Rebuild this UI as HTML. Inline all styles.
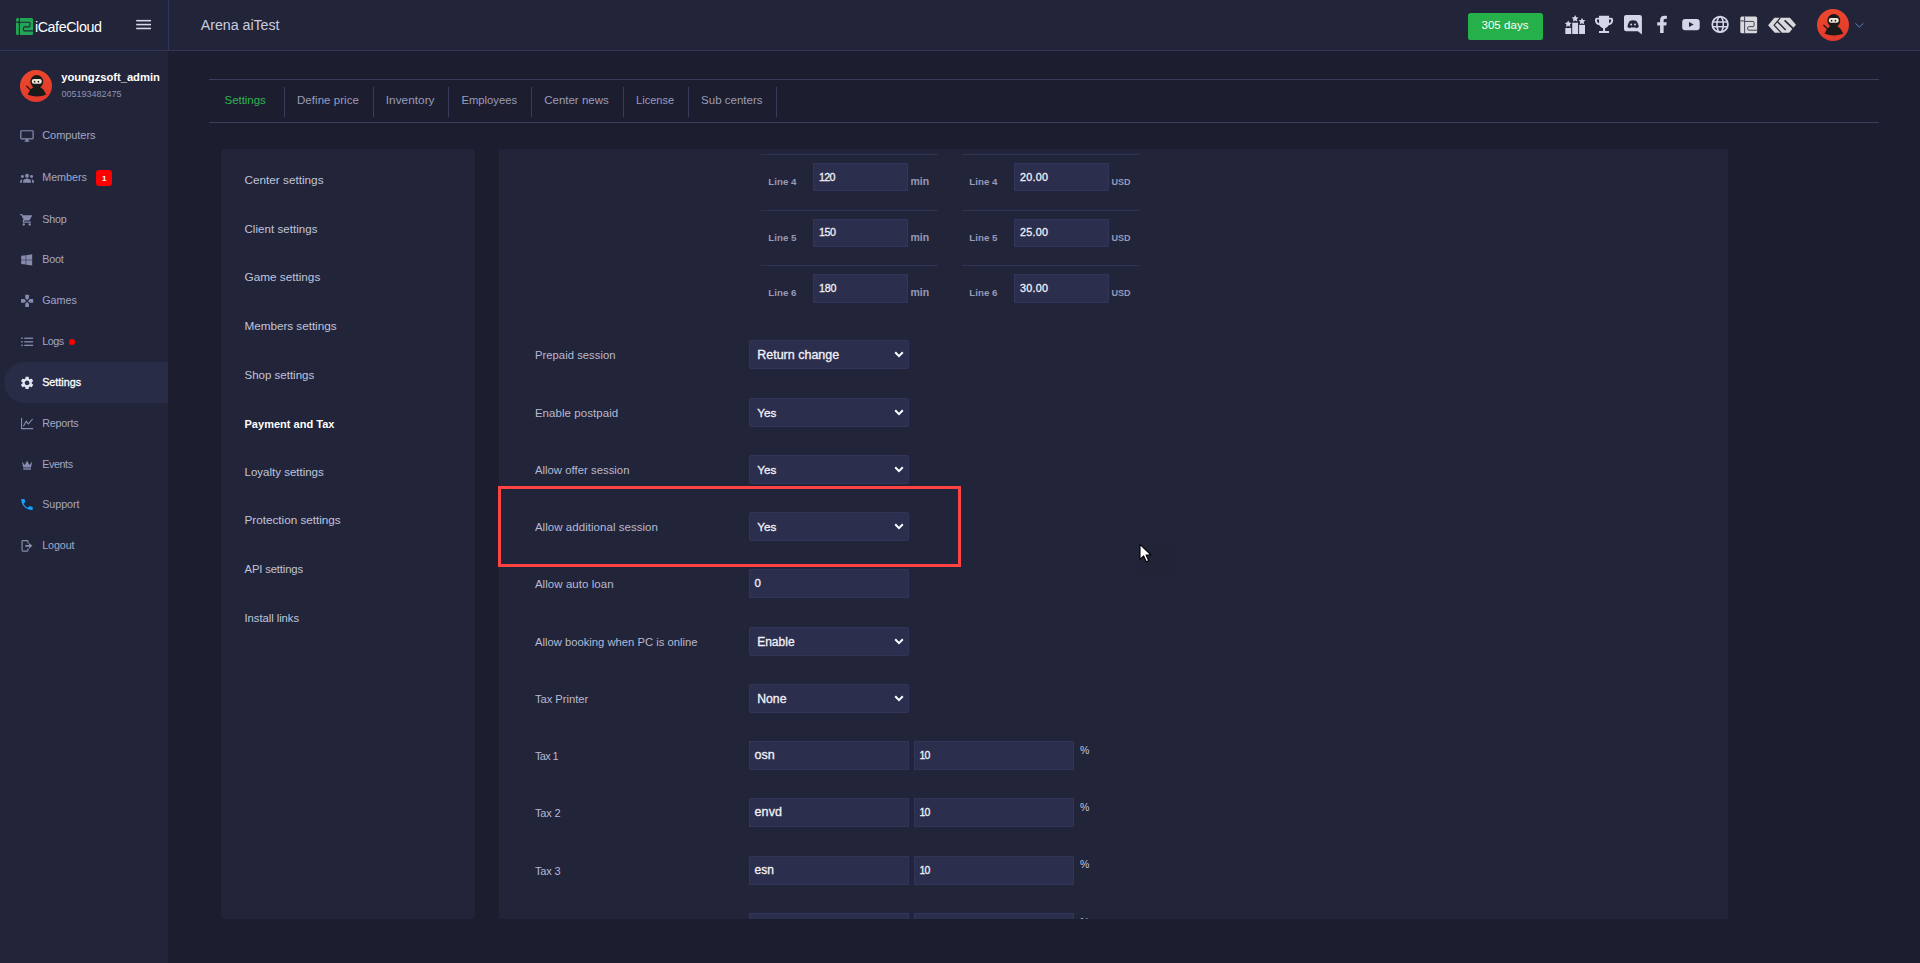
<!DOCTYPE html>
<html lang="en"><head><meta charset="utf-8"><title>iCafeCloud - Settings</title>
<style>
html,body{margin:0;padding:0}
body{width:1920px;height:963px;overflow:hidden;background:#1c1d2f;font-family:"Liberation Sans",sans-serif;position:relative}
.t{position:absolute;white-space:nowrap;line-height:16px;height:16px}
.m{-webkit-text-stroke:.3px currentColor}
svg{position:absolute;left:0;top:0;overflow:visible}
header{position:absolute;left:0;top:0;width:1920px;height:50px;background:#222439;border-bottom:1px solid #32365a}
header .brand{position:absolute;left:0;top:0;width:168px;height:50px;border-right:1px solid #32365a}
aside{position:absolute;left:0;top:51px;width:168px;height:912px;background:#222439}
aside ul{list-style:none;margin:0;padding:0}
.active{position:absolute;left:4px;top:362px;width:164px;height:41px;border-radius:20.5px 0 0 20.5px;background:#292c47}
.badge{position:absolute;left:96px;top:169.500px;width:16px;height:16.500px;border-radius:3px;background:#ff0000}
.dot{position:absolute;left:69px;top:339px;width:6px;height:6px;border-radius:50%;background:#ff0000}
main{position:absolute;left:0;top:0;width:1920px;height:963px}
.tabs{position:absolute;left:209px;top:79px;width:1670px;height:42px;border-top:1px solid #3a3c5c;border-bottom:1px solid #3a3c5c}
.sep{position:absolute;top:87px;width:1px;height:30px;background:#3a3c5c}
.card{position:absolute;background:#222439;border-radius:4px}
.inp{position:absolute;box-sizing:border-box;background:#2c2e4e;border:1px solid #323559;border-radius:0}
.sel{border-radius:2px}
.hl{position:absolute;height:1px;background:#2f3255}
.btn{position:absolute;left:1468px;top:13px;width:75px;height:27px;border-radius:2.500px;background:#26b04a}
.mark{position:absolute;left:498px;top:486px;width:463px;height:81px;box-sizing:border-box;border:3px solid #ff4242}
</style></head><body>

<header><div class="brand"></div></header>
<aside></aside>
<nav>
<div class="active"></div>
<span class="t" style="left:34.90px;top:19.000px;font-size:14.25px;color:#ffffff;letter-spacing:-0.390px;">iCafeCloud</span>
<span class="t" style="left:200.80px;top:17.000px;font-size:14.25px;color:#c9ccdf;letter-spacing:-0.043px;">Arena aiTest</span>
<span class="t" style="left:61.20px;top:69.000px;font-size:11.25px;color:#ffffff;font-weight:700;letter-spacing:-0.049px;">youngzsoft_admin</span>
<span class="t" style="left:61.50px;top:86.000px;font-size:9.0px;color:#8f93b0;">005193482475</span>
<span class="t" style="left:42.20px;top:127.000px;font-size:11.0px;color:#a3a7c5;letter-spacing:-0.055px;">Computers</span>
<span class="t" style="left:42.20px;top:169.000px;font-size:10.75px;color:#a3a7c5;">Members</span>
<span class="t" style="left:42.20px;top:211.000px;font-size:10.75px;color:#a3a7c5;letter-spacing:-0.202px;">Shop</span>
<span class="t" style="left:42.20px;top:251.000px;font-size:10.75px;color:#a3a7c5;letter-spacing:-0.204px;">Boot</span>
<span class="t" style="left:42.20px;top:292.000px;font-size:10.75px;color:#a3a7c5;">Games</span>
<span class="t" style="left:42.20px;top:333.000px;font-size:10.75px;color:#a3a7c5;letter-spacing:-0.453px;">Logs</span>
<span class="t m" style="left:42.20px;top:374.000px;font-size:10.75px;color:#ffffff;">Settings</span>
<span class="t" style="left:42.20px;top:415.000px;font-size:10.75px;color:#a3a7c5;letter-spacing:-0.192px;">Reports</span>
<span class="t" style="left:42.20px;top:456.000px;font-size:10.75px;color:#a3a7c5;letter-spacing:-0.394px;">Events</span>
<span class="t" style="left:42.20px;top:496.000px;font-size:10.75px;color:#a3a7c5;letter-spacing:-0.050px;">Support</span>
<span class="t" style="left:42.20px;top:537.000px;font-size:10.75px;color:#a3a7c5;letter-spacing:-0.097px;">Logout</span>
<div class="badge"></div><span class="t" style="left:102.10px;top:171.000px;font-size:8.0px;color:#ffffff;font-weight:700;">1</span>
<div class="dot"></div>
</nav>
<svg width="1920" height="600" viewBox="0 0 1920 600"><defs><linearGradient id="av" x1="0" y1="0" x2="0.3" y2="1"><stop offset="0" stop-color="#ee4a2e"/><stop offset="1" stop-color="#e23a2c"/></linearGradient></defs>
<g transform="translate(16 17.9) scale(1)"><rect width="17.1" height="17.1" rx="1.6" fill="#22a555"/>
<path d="M3.35 0V17.1M0 4.2H3.35" stroke="#222439" stroke-width="1.1" fill="none"/>
<path d="M3.35 4.3H12.9Q14 4.3 14 5.4V7.9Q14 9 12.9 9H8.6Q7.5 9 7.5 10.1V11.9Q7.5 13 8.6 13H17.1" stroke="#222439" stroke-width="1.1" fill="none"/></g>
<rect x="136.2" y="19.9" width="14.8" height="1.55" fill="#d6d9ea"/>
<rect x="136.2" y="23.8" width="14.8" height="1.55" fill="#d6d9ea"/>
<rect x="136.2" y="27.7" width="14.8" height="1.55" fill="#d6d9ea"/>
<g transform="translate(36 86)"><circle r="16" fill="url(#av)"/>
<path d="M-8.3 8.8 Q-6 2.4 -1.800 0.7 L3.400 0.7 Q7.800 2.4 10.100 8.8 Q1 12 -8.300 8.8z" fill="#1a1a1a"/>
<circle cx="0.8" cy="-4.4" r="6.5" fill="#1a1a1a"/>
<rect x="-4.2" y="-7" width="10" height="4.8" rx="2.2" fill="#f3ead6"/>
<circle cx="-1.4" cy="-4.3" r="0.85" fill="#1a1a1a"/><circle cx="2.4" cy="-4.300" r="0.85" fill="#1a1a1a"/>
<path d="M-9.2 0.2 L-4.2 5.2" stroke="#1a1a1a" stroke-width="1.3" stroke-linecap="round"/></g>
<path transform="translate(19.586 129.040) scale(0.61364 0.58000)" fill="#878cae" d="M21 2H3c-1.1 0-2 .9-2 2v12c0 1.1.9 2 2 2h7v2H8v2h8v-2h-2v-2h7c1.1 0 2-.9 2-2V4c0-1.1-.9-2-2-2zm0 14H3V4h18v12z"/>
<g fill="#878cae"><circle cx="27" cy="175.700" r="1.95"/><path d="M23.1 182.7v-1.300c0-2 2.600-2.900 3.900-2.900s3.900.9 3.900 2.900v1.300z"/><circle cx="22.4" cy="176.500" r="1.45"/><circle cx="31.600" cy="176.500" r="1.45"/><path d="M20 182.700v-1c0-1.500 1.500-2.300 2.700-2.400-.500.600-.800 1.300-.800 2.200v1.200z"/><path d="M34 182.700v-1c0-1.500-1.500-2.300-2.700-2.400.5.600.8 1.300.8 2.200v1.200z"/></g>
<path transform="translate(19.608 212.830) scale(0.59223 0.58500)" fill="#878cae" d="M7 18c-1.1 0-1.99.9-1.99 2S5.9 22 7 22s2-.9 2-2-.9-2-2-2zM1 2v2h2l3.6 7.59-1.35 2.45c-.16.28-.25.61-.25.96 0 1.1.9 2 2 2h12v-2H7.42c-.14 0-.25-.11-.25-.25l.03-.12.9-1.63h7.45c.75 0 1.41-.41 1.75-1.03l3.58-6.49c.08-.14.12-.31.12-.48 0-.55-.45-1-1-1H5.21l-.94-2H1zm16 16c-1.1 0-1.99.9-1.99 2s.89 2 1.99 2 2-.9 2-2-.9-2-2-2z"/>
<path transform="translate(21.200 253.500) scale(0.02455 0.02500)" fill="#878cae" d="M0 93.7l183.6-25.3v177.4H0V93.7zm0 324.6l183.6 25.3V268.4H0v149.9zm203.8 28L448 480V268.4H203.8v177.9zm0-380.6v180.1H448V32L203.8 65.7z"/>
<path transform="translate(19.780 293.580) scale(0.61000 0.61000)" fill="#878cae" d="M15 7.5V2H9v5.5l3 3 3-3zM7.5 9H2v6h5.5l3-3-3-3zM9 16.5V22h6v-5.5l-3-3-3 3zM16.5 9l-3 3 3 3H22V9h-5.500z"/>
<rect x="21.2" y="337.5" width="1.5" height="1.5" fill="#878cae"/><rect x="24.300" y="337.6" width="8.8" height="1.3" fill="#878cae"/>
<rect x="21.2" y="341.05" width="1.5" height="1.5" fill="#878cae"/><rect x="24.300" y="341.15000000000003" width="8.8" height="1.3" fill="#878cae"/>
<rect x="21.2" y="344.6" width="1.5" height="1.5" fill="#878cae"/><rect x="24.300" y="344.70000000000005" width="8.8" height="1.3" fill="#878cae"/>
<path transform="translate(19.313 375.275) scale(0.64894 0.63542)" fill="#e2e4f1" d="M19.14 12.94c.04-.3.06-.61.06-.94 0-.32-.02-.64-.07-.94l2.03-1.58c.18-.14.23-.41.12-.61l-1.92-3.32c-.12-.22-.37-.29-.59-.22l-2.39.96c-.5-.38-1.03-.7-1.62-.94l-.36-2.54c-.04-.24-.24-.41-.48-.41h-3.84c-.24 0-.43.17-.47.41l-.36 2.54c-.59.24-1.13.57-1.62.94l-2.39-.96c-.22-.08-.47 0-.59.22L2.74 8.870c-.12.21-.08.47.12.61l2.030 1.580c-.05.3-.09.63-.09.940s.02.640.07.940l-2.030 1.580c-.18.140-.23.410-.12.610l1.920 3.320c.12.220.370.290.590.220l2.390-.960c.5.380 1.030.7 1.620.940l.360 2.540c.05.240.240.410.480.410h3.840c.240 0 .440-.170.470-.410l.360-2.540c.590-.240 1.130-.560 1.620-.940l2.390.960c.220.080.470 0 .590-.220l1.920-3.320c.12-.220.070-.470-.12-.610l-2.010-1.580zM12 15.600c-1.980 0-3.600-1.620-3.600-3.600s1.620-3.600 3.600-3.600 3.600 1.620 3.600 3.600-1.620 3.600-3.600 3.600z"/>
<path d="M21.550 418v10.650H33.200" stroke="#878cae" stroke-width="1.1" fill="none"/><path d="M23.400 426.200L26.200 421.300L28.400 423.800L32.600 419" stroke="#878cae" stroke-width="1.1" fill="none"/>
<path d="M22 461.500L24.700 464.900L27.100 460.700L29.500 464.900L32.200 461.500L31 467.400H23.200z" fill="#878cae"/><rect x="23.200" y="468.300" width="7.800" height="1.400" fill="#878cae"/>
<path transform="translate(19.283 497.167) scale(0.63889 0.61111)" fill="#12a4ff" d="M6.62 10.79c1.44 2.83 3.76 5.14 6.59 6.59l2.2-2.2c.27-.27.67-.36 1.02-.24 1.12.37 2.33.57 3.57.57.55 0 1 .45 1 1V20c0 .55-.45 1-1 1-9.39 0-17-7.61-17-17 0-.55.45-1 1-1h3.5c.55 0 1 .45 1 1 0 1.25.2 2.45.57 3.57.11.35.03.74-.25 1.020l-2.200 2.200z"/>
<path d="M28 543.400V541.400q0-.85-.85-.85H22.900q-.85 0-.85.85V550.300q0 .85.85.85H27.150q.85 0 .85-.85V548.300" stroke="#878cae" stroke-width="1.150" fill="none"/><path d="M25.300 545H29V543.100L32.500 545.850L29 548.600V546.700H25.300z" fill="#878cae"/>
<g fill="#d3d6e6"><rect x="1565.3" y="28" width="5.9" height="6"/><rect x="1572.200" y="22.700" width="5.900" height="11.300"/><rect x="1579.100" y="24.900" width="5.900" height="9.100"/></g>
<polygon fill="#d3d6e6" points="1568.20,20.40 1569.26,22.54 1571.62,22.89 1569.91,24.56 1570.32,26.91 1568.20,25.80 1566.08,26.91 1566.49,24.56 1564.78,22.89 1567.14,22.54"/>
<polygon fill="#d3d6e6" points="1575.10,15.10 1576.16,17.24 1578.52,17.59 1576.81,19.26 1577.22,21.61 1575.10,20.50 1572.98,21.61 1573.39,19.26 1571.68,17.59 1574.04,17.24"/>
<polygon fill="#d3d6e6" points="1582.00,17.80 1583.06,19.94 1585.42,20.29 1583.71,21.96 1584.12,24.31 1582.00,23.20 1579.88,24.31 1580.29,21.96 1578.58,20.29 1580.94,19.94"/>
<path transform="translate(1591.983 12.933) scale(1.00556 0.95556)" fill="#d3d6e6" d="M19 5h-2V3H7v2H5c-1.1 0-2 .9-2 2v1c0 2.55 1.92 4.63 4.39 4.94.63 1.5 1.98 2.63 3.61 2.96V19H7v2h10v-2h-4v-3.1c1.63-.33 2.98-1.46 3.61-2.96C19.08 12.63 21 10.55 21 8V7c0-1.1-.9-2-2-2zM5 8V7h2v3.82C5.840 10.400 5 9.300 5 8zm14 0c0 1.300-.840 2.400-2 2.820V7h2v1z"/>
<path d="M1626.200 14.900h13.500a2.200 2.200 0 0 1 2.200 2.200v17.500l-4-3.300h-11.700a2.200 2.200 0 0 1 -2.200-2.200v-12a2.200 2.200 0 0 1 2.200-2.200z" fill="#d3d6e6"/>
<path d="M1629.700 20.900q3.400-1.300 6.800 0q2.100 3 2.300 6.100q-1.300 1-2.900 1.300l-.6-1q-2.200.5-4.400 0l-.6 1q-1.600-.3-2.900-1.300q.2-3.100 2.300-6.100z" fill="#222439"/><circle cx="1631.200" cy="24.600" r="1" fill="#d3d6e6"/><circle cx="1635" cy="24.600" r="1" fill="#d3d6e6"/>
<path transform="translate(1656.390 15.800) scale(0.03537 0.03359)" fill="#d3d6e6" d="M279.14 288l14.22-92.660h-88.910v-60.130c0-25.350 12.420-50.060 52.240-50.060h40.420V6.260S260.430 0 225.360 0c-73.220 0-121.080 44.380-121.080 124.720v70.620H22.890V288h81.390v224h100.170V288z"/>
<rect x="1682.200" y="18.900" width="17.500" height="11.400" rx="3" fill="#d3d6e6"/><path d="M1689 22.100V27L1693.700 24.550z" fill="#222439"/>
<g stroke="#d3d6e6" fill="none"><circle cx="1720.100" cy="24.400" r="7.800" stroke-width="1.800"/><ellipse cx="1720.100" cy="24.400" rx="3.200" ry="7.800" stroke-width="1.600"/><path d="M1712.600 22H1727.600M1712.600 26.800H1727.600" stroke-width="1.600"/></g>
<g transform="translate(1740.3 16.4) scale(0.985)"><rect width="17.1" height="17.1" rx="1.6" fill="#dadadd"/>
<path d="M4.4 0V17.1M0 4.6H4.4" stroke="#3c3e55" stroke-width="1.0" fill="none"/>
<path d="M4.4 5.1H12.9Q14 5.1 14 6.199999999999999V9.3Q14 10.4 12.9 10.4H8.6Q7.5 10.4 7.5 11.5V12.9Q7.5 14 8.6 14H17.1" stroke="#3c3e55" stroke-width="1.0" fill="none"/></g>
<path d="M1768.100 25.200L1774.400 17.800H1789.900L1796 24.700L1789.100 32.800H1774.800z" fill="#d9d9dc"/>
<path d="M1780.300 17.900L1774.100 25.200L1781.400 32.900" stroke="#222439" stroke-width="1.200" fill="none"/><path d="M1777.300 21.600L1785.700 30" stroke="#222439" stroke-width="1.400"/><path d="M1784.600 20.400L1793.800 29.200" stroke="#222439" stroke-width="1.600"/>
<g transform="translate(1833 25)"><circle r="16" fill="url(#av)"/>
<path d="M-8.3 8.8 Q-6 2.4 -1.800 0.7 L3.400 0.7 Q7.800 2.4 10.100 8.8 Q1 12 -8.300 8.8z" fill="#1a1a1a"/>
<circle cx="0.8" cy="-4.4" r="6.5" fill="#1a1a1a"/>
<rect x="-4.2" y="-7" width="10" height="4.8" rx="2.2" fill="#f3ead6"/>
<circle cx="-1.4" cy="-4.3" r="0.85" fill="#1a1a1a"/><circle cx="2.4" cy="-4.300" r="0.85" fill="#1a1a1a"/>
<path d="M-9.2 0.2 L-4.2 5.2" stroke="#1a1a1a" stroke-width="1.3" stroke-linecap="round"/></g>
<path d="M1855.400 23.300L1859.400 27.100L1863.400 23.300" stroke="#6480ba" stroke-width="1" fill="none"/>
</svg>
<div class="btn"></div><span class="t" style="left:1481.50px;top:17.000px;font-size:11.5px;color:#ffffff;letter-spacing:0.041px;">305 days</span>
<main>
<div class="tabs"></div>
<span class="t" style="left:224.50px;top:92.000px;font-size:11.5px;color:#2fb450;letter-spacing:-0.044px;">Settings</span>
<span class="t" style="left:297.00px;top:92.000px;font-size:11.5px;color:#9a9eba;letter-spacing:0.045px;">Define price</span>
<span class="t" style="left:385.80px;top:92.000px;font-size:11.75px;color:#9a9eba;letter-spacing:0.041px;">Inventory</span>
<span class="t" style="left:461.40px;top:92.000px;font-size:11.25px;color:#9a9eba;">Employees</span>
<span class="t" style="left:544.20px;top:92.000px;font-size:11.5px;color:#9a9eba;">Center news</span>
<span class="t" style="left:636.10px;top:92.000px;font-size:11.0px;color:#9a9eba;">License</span>
<span class="t" style="left:701.10px;top:92.000px;font-size:11.5px;color:#9a9eba;">Sub centers</span>
<div class="sep" style="left:284px"></div>
<div class="sep" style="left:373px"></div>
<div class="sep" style="left:448px"></div>
<div class="sep" style="left:531px"></div>
<div class="sep" style="left:623px"></div>
<div class="sep" style="left:688px"></div>
<div class="sep" style="left:776px"></div>
<div class="card" style="left:221px;top:149px;width:254px;height:770px"></div>
<span class="t" style="left:244.50px;top:172.000px;font-size:11.75px;color:#c0c4db;">Center settings</span>
<span class="t" style="left:244.50px;top:221.000px;font-size:11.5px;color:#c0c4db;letter-spacing:0.051px;">Client settings</span>
<span class="t" style="left:244.50px;top:269.000px;font-size:11.75px;color:#c0c4db;">Game settings</span>
<span class="t" style="left:244.50px;top:318.000px;font-size:11.75px;color:#c0c4db;letter-spacing:-0.046px;">Members settings</span>
<span class="t" style="left:244.50px;top:367.000px;font-size:11.5px;color:#c0c4db;">Shop settings</span>
<span class="t" style="left:244.50px;top:416.000px;font-size:11.0px;color:#ffffff;font-weight:700;letter-spacing:0.023px;">Payment and Tax</span>
<span class="t" style="left:244.50px;top:464.000px;font-size:11.5px;color:#c0c4db;">Loyalty settings</span>
<span class="t" style="left:244.50px;top:512.000px;font-size:11.75px;color:#c0c4db;letter-spacing:-0.024px;">Protection settings</span>
<span class="t" style="left:244.50px;top:561.000px;font-size:11.25px;color:#c0c4db;letter-spacing:-0.128px;">API settings</span>
<span class="t" style="left:244.50px;top:610.000px;font-size:11.25px;color:#c0c4db;letter-spacing:-0.040px;">Install links</span>
<div class="card" style="left:499px;top:149px;width:1229px;height:770px;border-radius:0"></div>
<div class="hl" style="left:761px;top:154.0px;width:177px"></div><div class="hl" style="left:962px;top:154.0px;width:177px"></div>
<div class="inp" style="left:813px;top:163.0px;width:95px;height:28px"></div><div class="inp" style="left:1014px;top:163.0px;width:95px;height:28px"></div>
<span class="t" style="left:768.30px;top:174.000px;font-size:9.75px;color:#9699b8;font-weight:700;">Line 4</span>
<span class="t" style="left:969.30px;top:174.000px;font-size:9.75px;color:#9699b8;font-weight:700;">Line 4</span>
<span class="t" style="left:910.50px;top:173.000px;font-size:10.5px;color:#9699b8;font-weight:700;">min</span>
<span class="t" style="left:1111.50px;top:174.000px;font-size:9.0px;color:#9699b8;font-weight:700;">USD</span>
<span class="t m" style="left:818.90px;top:169.000px;font-size:10.75px;color:#f0f0f6;letter-spacing:-0.679px;">120</span>
<span class="t m" style="left:1019.90px;top:169.000px;font-size:10.75px;color:#f0f0f6;letter-spacing:0.300px;">20.00</span>
<div class="hl" style="left:761px;top:210.0px;width:177px"></div><div class="hl" style="left:962px;top:210.0px;width:177px"></div>
<div class="inp" style="left:813px;top:219.0px;width:95px;height:28px"></div><div class="inp" style="left:1014px;top:219.0px;width:95px;height:28px"></div>
<span class="t" style="left:768.30px;top:230.000px;font-size:9.75px;color:#9699b8;font-weight:700;">Line 5</span>
<span class="t" style="left:969.30px;top:230.000px;font-size:9.75px;color:#9699b8;font-weight:700;">Line 5</span>
<span class="t" style="left:910.50px;top:229.000px;font-size:10.5px;color:#9699b8;font-weight:700;">min</span>
<span class="t" style="left:1111.50px;top:230.000px;font-size:9.0px;color:#9699b8;font-weight:700;">USD</span>
<span class="t m" style="left:818.90px;top:224.000px;font-size:10.75px;color:#f0f0f6;letter-spacing:-0.446px;">150</span>
<span class="t m" style="left:1019.90px;top:224.000px;font-size:10.75px;color:#f0f0f6;letter-spacing:0.300px;">25.00</span>
<div class="hl" style="left:761px;top:265.0px;width:177px"></div><div class="hl" style="left:962px;top:265.0px;width:177px"></div>
<div class="inp" style="left:813px;top:274.0px;width:95px;height:29px"></div><div class="inp" style="left:1014px;top:274.0px;width:95px;height:29px"></div>
<span class="t" style="left:768.30px;top:285.000px;font-size:9.75px;color:#9699b8;font-weight:700;">Line 6</span>
<span class="t" style="left:969.30px;top:285.000px;font-size:9.75px;color:#9699b8;font-weight:700;">Line 6</span>
<span class="t" style="left:910.50px;top:284.000px;font-size:10.5px;color:#9699b8;font-weight:700;">min</span>
<span class="t" style="left:1111.50px;top:285.000px;font-size:9.0px;color:#9699b8;font-weight:700;">USD</span>
<span class="t m" style="left:818.90px;top:280.000px;font-size:10.75px;color:#f0f0f6;letter-spacing:-0.212px;">180</span>
<span class="t m" style="left:1019.90px;top:280.000px;font-size:10.75px;color:#f0f0f6;letter-spacing:0.300px;">30.00</span>
<div class="inp sel" style="left:749px;top:340.0px;width:160px;height:29px;"></div>
<span class="t" style="left:534.90px;top:347.000px;font-size:11.25px;color:#b6bad2;letter-spacing:0.043px;">Prepaid session</span>
<span class="t m" style="left:757.20px;top:347.000px;font-size:12.5px;color:#f2f2f7;">Return change</span>
<svg width="10" height="7" viewBox="0 0 10 7" style="left:894px;top:350.9px"><path d="M1.2 1.300L5 5.100L8.800 1.300" stroke="#ffffff" stroke-width="2" fill="none"/></svg>
<div class="inp sel" style="left:749px;top:398.0px;width:160px;height:29px;"></div>
<span class="t" style="left:534.90px;top:405.000px;font-size:11.5px;color:#b6bad2;letter-spacing:0.061px;">Enable postpaid</span>
<span class="t m" style="left:757.20px;top:405.000px;font-size:11.75px;color:#f2f2f7;">Yes</span>
<svg width="10" height="7" viewBox="0 0 10 7" style="left:894px;top:408.9px"><path d="M1.2 1.300L5 5.100L8.800 1.300" stroke="#ffffff" stroke-width="2" fill="none"/></svg>
<div class="inp sel" style="left:749px;top:455.0px;width:160px;height:29px;"></div>
<span class="t" style="left:534.90px;top:462.000px;font-size:11.25px;color:#b6bad2;letter-spacing:0.053px;">Allow offer session</span>
<span class="t m" style="left:757.20px;top:462.000px;font-size:11.75px;color:#f2f2f7;">Yes</span>
<svg width="10" height="7" viewBox="0 0 10 7" style="left:894px;top:465.9px"><path d="M1.2 1.300L5 5.100L8.800 1.300" stroke="#ffffff" stroke-width="2" fill="none"/></svg>
<div class="inp sel" style="left:749px;top:512.0px;width:160px;height:29px;"></div>
<span class="t" style="left:534.90px;top:519.000px;font-size:11.5px;color:#b6bad2;letter-spacing:0.042px;">Allow additional session</span>
<span class="t m" style="left:757.20px;top:519.000px;font-size:11.75px;color:#f2f2f7;">Yes</span>
<svg width="10" height="7" viewBox="0 0 10 7" style="left:894px;top:522.9px"><path d="M1.2 1.300L5 5.100L8.800 1.300" stroke="#ffffff" stroke-width="2" fill="none"/></svg>
<div class="inp" style="left:749px;top:569.3px;width:160px;height:29px;"></div>
<span class="t" style="left:534.90px;top:576.000px;font-size:11.5px;color:#b6bad2;letter-spacing:0.053px;">Allow auto loan</span>
<span class="t m" style="left:754.50px;top:575.000px;font-size:11.5px;color:#f2f2f7;">0</span>
<div class="inp sel" style="left:749px;top:627.0px;width:160px;height:29px;"></div>
<span class="t" style="left:534.90px;top:634.000px;font-size:11.25px;color:#b6bad2;">Allow booking when PC is online</span>
<span class="t m" style="left:757.20px;top:634.000px;font-size:12.0px;color:#f2f2f7;">Enable</span>
<svg width="10" height="7" viewBox="0 0 10 7" style="left:894px;top:637.9px"><path d="M1.2 1.300L5 5.100L8.800 1.300" stroke="#ffffff" stroke-width="2" fill="none"/></svg>
<div class="inp sel" style="left:749px;top:684.0px;width:160px;height:29px;"></div>
<span class="t" style="left:534.90px;top:691.000px;font-size:11.25px;color:#b6bad2;letter-spacing:-0.043px;">Tax Printer</span>
<span class="t m" style="left:757.20px;top:691.000px;font-size:12.25px;color:#f2f2f7;">None</span>
<svg width="10" height="7" viewBox="0 0 10 7" style="left:894px;top:694.9px"><path d="M1.2 1.300L5 5.100L8.800 1.300" stroke="#ffffff" stroke-width="2" fill="none"/></svg>
<div class="inp" style="left:749px;top:741.0px;width:160px;height:29px;"></div>
<span class="t" style="left:534.90px;top:748.000px;font-size:11.0px;color:#b6bad2;letter-spacing:-0.658px;">Tax 1</span>
<div class="inp" style="left:914px;top:741.0px;width:160px;height:29px;"></div>
<span class="t m" style="left:754.50px;top:747.000px;font-size:12.5px;color:#f2f2f7;">osn</span>
<span class="t m" style="left:919.50px;top:747.000px;font-size:10.5px;color:#f2f2f7;letter-spacing:-0.840px;">10</span>
<span class="t" style="left:1079.90px;top:742.000px;font-size:10.5px;color:#c4c7db;">%</span>
<div class="inp" style="left:749px;top:798.3px;width:160px;height:29px;"></div>
<span class="t" style="left:534.90px;top:805.000px;font-size:11.0px;color:#b6bad2;letter-spacing:-0.138px;">Tax 2</span>
<div class="inp" style="left:914px;top:798.3px;width:160px;height:29px;"></div>
<span class="t m" style="left:754.50px;top:804.000px;font-size:12.5px;color:#f2f2f7;letter-spacing:0.123px;">envd</span>
<span class="t m" style="left:919.50px;top:804.000px;font-size:10.5px;color:#f2f2f7;letter-spacing:-0.840px;">10</span>
<span class="t" style="left:1079.90px;top:799.000px;font-size:10.5px;color:#c4c7db;">%</span>
<div class="inp" style="left:749px;top:855.7px;width:160px;height:29px;"></div>
<span class="t" style="left:534.90px;top:863.000px;font-size:11.0px;color:#b6bad2;letter-spacing:-0.138px;">Tax 3</span>
<div class="inp" style="left:914px;top:855.7px;width:160px;height:29px;"></div>
<span class="t m" style="left:754.50px;top:862.000px;font-size:12.0px;color:#f2f2f7;">esn</span>
<span class="t m" style="left:919.50px;top:862.000px;font-size:10.5px;color:#f2f2f7;letter-spacing:-0.840px;">10</span>
<span class="t" style="left:1079.90px;top:856.000px;font-size:10.5px;color:#c4c7db;">%</span>
<div class="inp" style="left:749px;top:913.0px;width:160px;height:29px;clip-path:inset(0 0 23px 0);"></div>
<div class="inp" style="left:914px;top:913.0px;width:160px;height:29px;clip-path:inset(0 0 23px 0);"></div>
<div style="position:absolute;left:0;top:0;width:1920px;height:919px;overflow:hidden"><span class="t" style="left:1079.90px;top:914.000px;font-size:10.5px;color:#c4c7db;">%</span></div>
<div class="mark"></div>
<div style="position:absolute;left:1138px;top:544px;width:36px;height:32px;background:rgba(0,0,0,.02)"></div>
<svg width="14" height="20" viewBox="0 0 14 20" style="left:1138.7px;top:543.300px"><path d="M1 1.300V16.300L4.600 12.900L7.300 18.800L9.700 17.700L7.100 12H12z" fill="#fff" stroke="#000" stroke-width="1.100" stroke-linejoin="round"/></svg>
</main>
</body></html>
